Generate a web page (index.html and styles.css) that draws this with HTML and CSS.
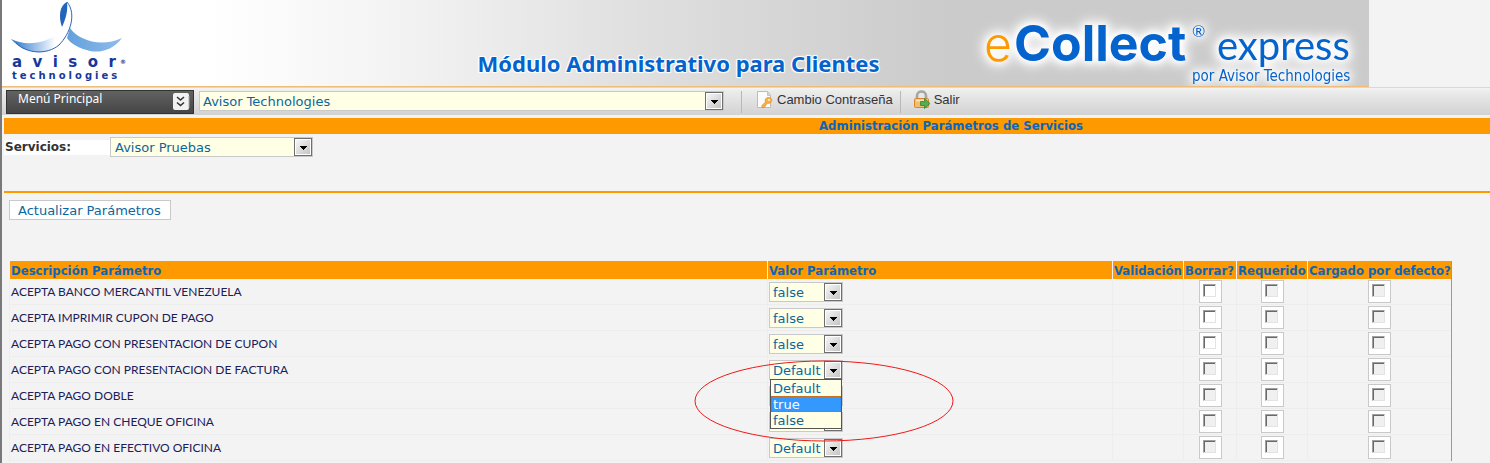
FILE: index.html
```html
<!DOCTYPE html>
<html lang="es">
<head>
<meta charset="utf-8">
<title>Administración Parámetros de Servicios</title>
<link rel="stylesheet" href="styles.css">
</head>
<body>
<svg class="defs" aria-hidden="true">
  <defs>
    <linearGradient id="btn" x1="0" y1="0" x2="1" y2="1"><stop offset="0" stop-color="#f6f6f6"/><stop offset="1" stop-color="#c4c4c4"/></linearGradient>
    <symbol id="arrow" viewBox="0 0 18 18">
      <rect x=".5" y=".5" width="17" height="17" fill="#fff" stroke="#6e6e6e"/>
      <rect x="2" y="2" width="14" height="14" fill="url(#btn)"/>
      <path d="M6 8h7v1h-1v1h-1v1h-1v1h-1v-1H8v-1H7V9H6z" fill="#000"/>
    </symbol>
  </defs>
</svg>
<header class="banner">
  <svg class="avisor" viewBox="0 0 120 86" width="120" height="86" role="img" aria-label="avisor technologies">
    <defs>
      <linearGradient id="wingL"><stop offset="0" stop-color="#2a74cc"/><stop offset=".45" stop-color="#9cc0ea"/><stop offset=".8" stop-color="#fff"/></linearGradient>
      <linearGradient id="wingR"><stop offset="0" stop-color="#62a0dc"/><stop offset="1" stop-color="#8fbdec"/></linearGradient>
    </defs>
    <path d="M2 39C14 45 30 45 46 36C55 34 58 35 57 38C50 50 38 53 28 52C17 51 9 47 2 39z" fill="url(#wingL)"/>
    <path d="M61 28C69 40 92 48 113 38C104 50 92 53 81 51C69 48 61 43 58 38z" fill="url(#wingR)"/>
    <path d="M7 43C18 54 38 55 50 45C61 34 68 14 58 2" fill="none" stroke="#2b65b8" stroke-width="1"/>
    <path d="M53 27C49 16 51 5 58 2C59 11 57 18 53 27z" fill="#2465bb"/>
    <text class="avisor-name" x="3" y="67">a&#160; v&#160; i&#160; s&#160; o&#160; r</text>
    <text class="avisor-mark" x="111" y="64">®</text>
    <text class="avisor-sub" x="3" y="79">technologies</text>
  </svg>
  <h1 class="banner-title">Módulo Administrativo para Clientes</h1>
  <svg class="brand" viewBox="0 0 409 86" width="409" height="86" role="img" aria-label="eCollect express por Avisor Technologies">
    <g class="glow">
      <text class="brand-e" x="24" y="61">e</text>
      <text class="brand-collect" x="54" y="61">Collect</text>
      <text class="brand-mark" x="232" y="37">®</text>
      <text class="brand-express" x="257" y="60">express</text>
      <text class="brand-by" x="232" y="81">por Avisor Technologies</text>
    </g>
  </svg>
</header>
<nav class="toolbar">
  <button class="menu" type="button"><span>Menú Principal</span>
    <svg viewBox="0 0 17 17" width="17" height="17" aria-hidden="true"><rect width="16" height="17" rx="2" fill="#f2f2f2"/><path d="M16 3v12" stroke="#aaa"/><path d="M4 4l3.500 3 3.500-3M4 9.500l3.500 3 3.500-3" fill="none" stroke="#333" stroke-width="1.600"/></svg>
  </button>
  <span class="select company">
    <select aria-label="Empresa"><option>Avisor Technologies</option></select>
    <svg><use href="#arrow"/></svg>
  </span>
  <a class="tool" href="#clave">
    <svg viewBox="0 0 18 19" width="18" height="19" aria-hidden="true"><path d="M1.500 1.500h10l3 4v12h-13z" fill="#fcfcfc" stroke="#bcbcbc"/><path d="M11.500 1.500v4h3z" fill="#ddd" stroke="#c4c4c4"/><path d="M6 15.500L9.500 12C8.500 9.500 10 7.500 12.500 7.500C15 7.500 16.500 9.500 15.500 11.500C14.500 13.500 12.500 13.500 11 13L8.500 17.500H6z" fill="#f7b14b" stroke="#dd8f2d" stroke-width=".8"/><circle cx="13" cy="10" r="1" fill="#fff1cf"/></svg>
    <span>Cambio Contraseña</span>
  </a>
  <a class="tool" href="#salir">
    <svg viewBox="0 0 18 19" width="18" height="19" aria-hidden="true"><path d="M4 9V6C4 0 13 0 13 6V9" fill="none" stroke="#a5a5a5" stroke-width="2.600"/><rect x="1.500" y="8.500" width="14" height="9" rx="1" fill="#f4bd68" stroke="#d9852e"/><path d="M3 10.500h10" stroke="#fbe3b5" stroke-width="2"/><path d="M7.500 11.500h4V8.500l5.500 5-5.500 5v-3h-4z" fill="#5cab52" stroke="#35842f" stroke-width=".8"/></svg>
    <span>Salir</span>
  </a>
</nav>
<main>
  <h2 class="page-title">Administración Parámetros de Servicios</h2>
  <div class="filter">
    <label for="svc">Servicios:</label>
    <span class="select service">
      <select id="svc"><option>Avisor Pruebas</option></select>
      <svg><use href="#arrow"/></svg>
    </span>
  </div>
  <div class="content">
    <button class="update" type="button">Actualizar Parámetros</button>
    <table class="params">
      <colgroup><col><col class="c-value"><col class="c-valid"><col class="c-delete"><col class="c-req"><col class="c-load"></colgroup>
      <thead><tr><th>Descripción Parámetro</th><th>Valor Parámetro</th><th>Validación</th><th>Borrar?</th><th>Requerido</th><th>Cargado por defecto?</th></tr></thead>
      <tbody>
        <tr><td>ACEPTA BANCO MERCANTIL VENEZUELA</td><td><span class="select value"><select aria-label="Valor"><option>false</option></select><svg><use href="#arrow"/></svg></span></td><td></td><td><label class="tick"><input type="checkbox" aria-label="Borrar"></label></td><td><label class="tick"><input type="checkbox" aria-label="Requerido" disabled></label></td><td><label class="tick"><input type="checkbox" aria-label="Cargado por defecto" disabled></label></td></tr>
        <tr><td>ACEPTA IMPRIMIR CUPON DE PAGO</td><td><span class="select value"><select aria-label="Valor"><option>false</option></select><svg><use href="#arrow"/></svg></span></td><td></td><td><label class="tick"><input type="checkbox" aria-label="Borrar"></label></td><td><label class="tick"><input type="checkbox" aria-label="Requerido" disabled></label></td><td><label class="tick"><input type="checkbox" aria-label="Cargado por defecto" disabled></label></td></tr>
        <tr><td>ACEPTA PAGO CON PRESENTACION DE CUPON</td><td><span class="select value"><select aria-label="Valor"><option>false</option></select><svg><use href="#arrow"/></svg></span></td><td></td><td><label class="tick"><input type="checkbox" aria-label="Borrar"></label></td><td><label class="tick"><input type="checkbox" aria-label="Requerido" disabled></label></td><td><label class="tick"><input type="checkbox" aria-label="Cargado por defecto" disabled></label></td></tr>
        <tr><td>ACEPTA PAGO CON PRESENTACION DE FACTURA</td><td><div class="open"><span class="select value"><select aria-label="Valor"><option>Default</option></select><svg><use href="#arrow"/></svg></span>
          <ul class="options" role="listbox"><li role="option">Default</li><li role="option" class="active" aria-selected="true">true</li><li role="option">false</li></ul>
          <svg class="ring" viewBox="0 0 260 82" aria-hidden="true"><ellipse cx="130" cy="41" rx="129" ry="40" fill="none" stroke="#f01818"/></svg></div></td><td></td><td><label class="tick"><input type="checkbox" aria-label="Borrar" disabled></label></td><td><label class="tick"><input type="checkbox" aria-label="Requerido" disabled></label></td><td><label class="tick"><input type="checkbox" aria-label="Cargado por defecto" disabled></label></td></tr>
        <tr><td>ACEPTA PAGO DOBLE</td><td><span class="select value"><select aria-label="Valor"><option></option></select><svg><use href="#arrow"/></svg></span></td><td></td><td><label class="tick"><input type="checkbox" aria-label="Borrar" disabled></label></td><td><label class="tick"><input type="checkbox" aria-label="Requerido" disabled></label></td><td><label class="tick"><input type="checkbox" aria-label="Cargado por defecto" disabled></label></td></tr>
        <tr><td>ACEPTA PAGO EN CHEQUE OFICINA</td><td><span class="select value"><select aria-label="Valor"><option></option></select><svg><use href="#arrow"/></svg></span></td><td></td><td><label class="tick"><input type="checkbox" aria-label="Borrar" disabled></label></td><td><label class="tick"><input type="checkbox" aria-label="Requerido" disabled></label></td><td><label class="tick"><input type="checkbox" aria-label="Cargado por defecto" disabled></label></td></tr>
        <tr><td>ACEPTA PAGO EN EFECTIVO OFICINA</td><td><span class="select value"><select aria-label="Valor"><option>Default</option></select><svg><use href="#arrow"/></svg></span></td><td></td><td><label class="tick"><input type="checkbox" aria-label="Borrar" disabled></label></td><td><label class="tick"><input type="checkbox" aria-label="Requerido" disabled></label></td><td><label class="tick"><input type="checkbox" aria-label="Cargado por defecto" disabled></label></td></tr>
      </tbody>
    </table>
  </div>
</main>
</body>
</html>
```
FILE: styles.css
```css
* { box-sizing: border-box; }
body {
  margin: 0;
  border-left: 2px solid #77797b;
  background: #f3f3f3;
  color: #0b66a8;
  font: 13px/16px "DejaVu Sans", sans-serif;
}
.defs { position: absolute; width: 0; height: 0; }

.banner {
  display: flex;
  align-items: flex-start;
  justify-content: space-between;
  height: 87px;
  margin-right: 121px;
  background: linear-gradient(90deg, #fff 15%, #f4f4f4 28%, #dedede 48%, #cbcbcb 69%);
  border-bottom: 1px solid #f0bd78;
}
.avisor { margin-left: 7px; }
.avisor text { font-family: "DejaVu Sans", sans-serif; font-weight: 700; fill: #17389a; }
.avisor .avisor-name { font-size: 15px; }
.avisor .avisor-sub { font-size: 10px; letter-spacing: 3px; }
.avisor .avisor-mark { font-size: 6px; }
.banner-title {
  margin: 48px 0 0 268px;
  font: 700 22px/30px "Noto Sans", sans-serif;
  color: #0463cd;
  white-space: nowrap;
  text-shadow: 1px 1px 1px #fff, -1px -1px 1px #fff, 1px -1px 1px #fff, -1px 1px 1px #fff;
}
.brand { flex: none; }
.glow { filter: drop-shadow(0 0 3px #fff) drop-shadow(0 0 5px #fff) drop-shadow(0 0 6px #fff); fill: #0463cd; }
.brand-e { font: 300 48px Inter, sans-serif; fill: #ff9900; }
.brand-collect { font: 700 50px Inter, sans-serif; }
.brand-mark { font: 400 16px Lato, sans-serif; }
.brand-express { font: 400 40px Lato, sans-serif; }
.brand-by { font: 400 15px "DejaVu Sans Condensed", sans-serif; }

.toolbar {
  display: flex;
  align-items: center;
  height: 28px;
  padding-left: 4px;
  border-top: 1px solid #d8d8d8;
  background: linear-gradient(#f4f4f4, #ececec 3px, #d2d2d2);
}
.menu {
  display: flex;
  justify-content: space-between;
  align-items: center;
  width: 188px;
  height: 24px;
  padding: 0 3px 0 11px;
  border: 1px solid #333;
  background: linear-gradient(#626262, #454545);
  color: #fff;
  font: 12px/16px "Noto Sans", sans-serif;
}
.menu span { align-self: flex-start; }
.select { position: relative; display: block; height: 20px; border: 1px solid #c9c9c9; }
.select select {
  display: block;
  appearance: none;
  width: 100%;
  height: 18px;
  padding: 1px 18px 0 3px;
  border: 0;
  border-radius: 0;
  background: #ffffe6;
  color: #0b66a0;
  font: 13px/17px "DejaVu Sans", sans-serif;
}
.select svg { position: absolute; top: 0; right: 0; width: 18px; height: 18px; pointer-events: none; }
.company { width: 525px; margin: 0 17px 2px 5px; }
.tool {
  display: flex;
  align-items: center;
  gap: 3px;
  height: 22px;
  padding: 0 7px 4px 14px;
  border-left: 1px solid #b8b8b8;
  color: #333;
  font: 13px/16px "Liberation Sans", sans-serif;
  text-decoration: none;
}
.tool + .tool { padding-left: 12px; }

main { padding: 3px 0 0 2px; }
.page-title { margin: 0; background: #ff9900; font: 700 13px/16px "DejaVu Sans Condensed", "DejaVu Sans", sans-serif; color: #0b66b8; padding-left: 408px; text-align: center; }
.filter { display: flex; align-items: flex-start; height: 59px; padding-top: 3px; border-bottom: 2px solid #ff9900; }
.filter label { width: 106px; margin-top: 1px; padding: 2px 0 0 1px; background: linear-gradient(#f3f3f3 0 2px, #fff 2px); font: 700 12px/15px "DejaVu Sans", sans-serif; color: #333; }
.service { width: 203px; }
.service select { padding-left: 4px; }
.content { padding: 7px 38px 2px 5px; }
.update { display: block; height: 20px; padding: 1px 9px 0 8px; border: 1px solid #c9c9c9; background: #fff; color: #0b66a0; font: 13px/16px "DejaVu Sans", sans-serif; white-space: nowrap; }
.params { width: 100%; margin-top: 41px; border-collapse: separate; border-spacing: 0; table-layout: fixed; border-right: 1px solid #999; }
.c-value { width: 345px; }
.c-valid { width: 71px; }
.c-delete { width: 53px; }
.c-req { width: 71px; }
.c-load { width: 144px; }
.params th { height: 18px; padding: 2px 0 0 1px; background: #ff9900; border-left: 1px solid #f3f3f3; color: #0b66b8; font: 700 13px/16px "DejaVu Sans Condensed", "DejaVu Sans", sans-serif; text-align: left; white-space: nowrap; }
.params td { height: 26px; padding: 0 1px; border-left: 1px solid #ededed; border-bottom: 1px solid #ededed; color: #1b2058; font: 12px/20px Lato, sans-serif; white-space: nowrap; }
.value { width: 74px; }
.open { position: relative; }
.options {
  position: absolute;
  z-index: 1;
  top: 19px;
  left: 1px;
  width: 72px;
  margin: 0;
  padding: 0;
  border: 1px solid #555;
  background: #ffffe6;
  color: #0b66a0;
  font: 13px/16px "DejaVu Sans", sans-serif;
  list-style: none;
}
.options li { height: 16px; padding: 1px 0 0 2px; }
.options .active { background: #3399ff; color: #fff; outline: 1px dotted #c56a1c; outline-offset: -1px; }
.ring { position: absolute; z-index: 2; top: 0; left: -75px; width: 260px; height: 82px; pointer-events: none; }
.tick { display: block; width: 23px; height: 23px; margin: 0 auto; padding: 3px; border: 1px solid #c9c9c9; background: #fff; }
.tick input { display: block; appearance: none; width: 13px; height: 13px; margin: 0; border: 1px solid; border-color: #a0a0a0 #e3e3e3 #e3e3e3 #a0a0a0; background: #fff; box-shadow: inset 1px 1px #696969; }
.tick input:disabled { background: #f0f0f0; }
```
